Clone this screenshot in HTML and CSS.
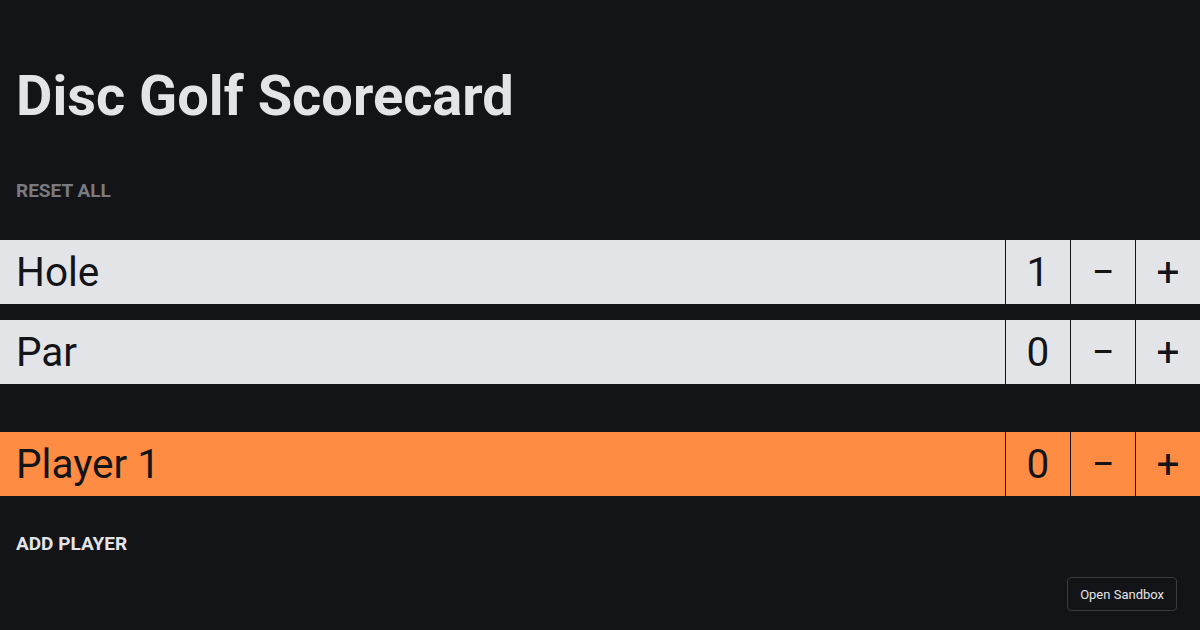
FILE: index.html
```html
<!DOCTYPE html>
<html>
<head>
<meta charset="utf-8">
<link rel="stylesheet" href="styles.css">
</head>
<body>
<div class="app">
  <h1 class="title">Disc Golf Scorecard</h1>
  <button class="text-btn reset">RESET ALL</button>
  <div class="rows">
    <div class="row light">
      <div class="label">Hole</div>
      <div class="cell">1</div>
      <button class="cell">−</button>
      <button class="cell">+</button>
    </div>
    <div class="row light">
      <div class="label">Par</div>
      <div class="cell">0</div>
      <button class="cell">−</button>
      <button class="cell">+</button>
    </div>
  </div>
  <div class="rows players">
    <div class="row orange">
      <div class="label">Player 1</div>
      <div class="cell">0</div>
      <button class="cell">−</button>
      <button class="cell">+</button>
    </div>
  </div>
  <button class="text-btn add">ADD PLAYER</button>
</div>
<button class="sandbox">Open Sandbox</button>
</body>
</html>
```

FILE: styles.css
```css
* { box-sizing: border-box; }
html, body {
  margin: 0;
  padding: 0;
  background: #131418;
  height: 100%;
  overflow: hidden;
}
body {
  font-family: Roboto, "Liberation Sans", sans-serif;
  color: #e3e4e8;
  position: relative;
}
.app {
  display: flex;
  flex-direction: column;
  align-items: flex-start;
  padding-top: 60px;
}
.title {
  margin: 0 0 0 16px;
  font-size: 56px;
  font-weight: 700;
  line-height: 72px;
  color: #e3e4e8;
}
.text-btn {
  background: none;
  border: none;
  font-family: Roboto, "Liberation Sans", sans-serif;
  font-weight: 700;
  font-size: 19px;
  padding: 0 16px;
  line-height: 24px;
  cursor: pointer;
}
.reset {
  color: #7a7b80;
  margin-top: 47px;
}
.add {
  color: #e3e4e8;
  margin-top: 36px;
}
.rows {
  width: 100%;
  display: flex;
  flex-direction: column;
  gap: 16px;
  margin-top: 37px;
}
.players {
  margin-top: 48px;
}
.row {
  display: flex;
  height: 64px;
  color: #131418;
  font-size: 40.5px;
}
.light { background: #e3e4e8; }
.orange { background: #ff8c42; }
.label {
  flex: 1;
  padding-left: 16px;
  display: flex;
  align-items: center;
}
.cell {
  width: 65px;
  border: none;
  border-left: 1px solid #131418;
  background: transparent;
  color: #131418;
  font-family: Roboto, "Liberation Sans", sans-serif;
  font-size: 40.5px;
  padding: 0;
  display: flex;
  align-items: center;
  justify-content: center;
}
.sandbox {
  position: absolute;
  right: 23px;
  bottom: 19px;
  height: 34px;
  padding: 0 12px;
  background: #131418;
  border: 1px solid #3a3b40;
  border-radius: 4px;
  color: #e3e4e8;
  font-family: Roboto, "Liberation Sans", sans-serif;
  font-size: 13px;
}
```
